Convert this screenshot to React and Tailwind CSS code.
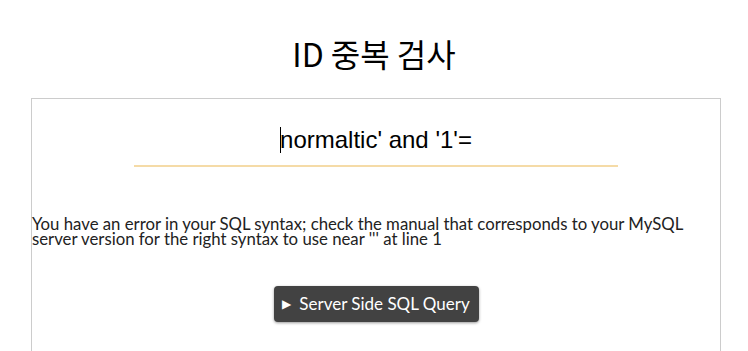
export default function App() {
  return (
    <div className="w-[748px] h-[351px] overflow-hidden bg-white">
      <h1 className="pt-[33px] text-center text-[32px] leading-[40px] text-black" style={{ fontFamily: '"Noto Sans CJK KR", "Noto Sans", sans-serif' }}>
        ID 중복 검사
      </h1>
      <div className="mt-[25px] ml-[31px] w-[690px] h-[300px] border border-[#cccccc] border-b-0">
        <div className="flex justify-center pt-[20px]">
          <div className="relative w-[484px] h-[48px] border-b-2 border-[#f5dba7] flex items-start pt-[6px] justify-center">
            <span className="relative text-[24px] leading-[30px] text-black" style={{ fontFamily: '"Liberation Sans", Arial, sans-serif' }}>
              <span className="absolute left-0 top-[2px] w-px h-[26px] bg-black"></span>
              normaltic' and '1'=
            </span>
          </div>
        </div>
        <p className="mt-[49px] text-[16.75px] leading-[15px] text-[#222]" style={{ fontFamily: 'Lato, "Noto Sans", sans-serif' }}>
          You have an error in your SQL syntax; check the manual that corresponds to your MySQL server version for the right syntax to use near ''' at line 1
        </p>
        <div className="flex justify-center mt-[40px]">
          <button className="h-[36px] w-[205px] rounded-[4px] bg-[#424242] text-white text-[17px] flex items-center justify-center gap-[8px] shadow-[0_1px_3px_rgba(0,0,0,0.4)]" style={{ fontFamily: 'Lato, "Noto Sans", sans-serif' }}>
            <span className="text-[12px]">▶</span>
            <span>Server Side SQL Query</span>
          </button>
        </div>
      </div>
    </div>
  );
}
